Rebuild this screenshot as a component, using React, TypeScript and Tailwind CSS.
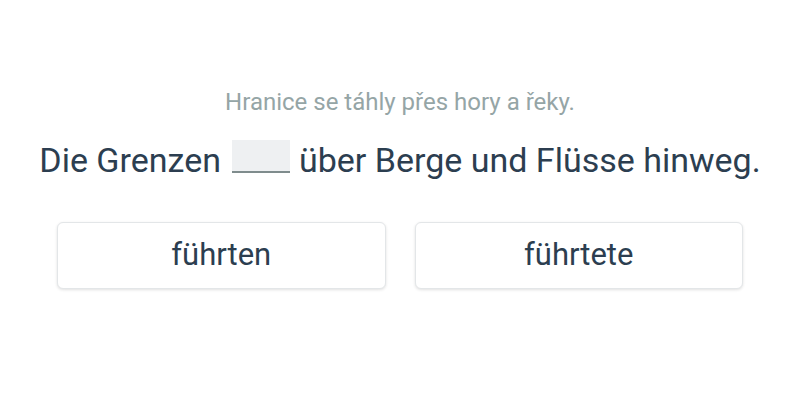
import React from "react";

export default function App() {
    const options = ["führten", "führtete"];

    return (
        <div className="w-[800px] h-[400px] bg-white flex flex-col items-center font-['Roboto',sans-serif]">
            <p className="mt-[86px] text-[24px] leading-[32px] text-[#95a5a6]">
                Hranice se táhly přes hory a řeky.
            </p>
            <h1 className="mt-[22px] h-[40px] text-[34px] leading-[40px] text-[#2c3e50] flex items-start">
                Die Grenzen
                <span className="inline-block w-[58px] h-[33px] ml-[11px] mr-[9px] bg-[#eef0f2] border-b-2 border-[#7f8c8d]"></span>
                über Berge und Flüsse hinweg.
            </h1>
            <div className="mt-[42px] grid grid-cols-2 gap-[29px] w-[686px]">
                {options.map((o) => (
                    <button
                        key={o}
                        className="h-[67px] bg-white rounded-[6px] border border-[#e3e6e8] shadow-[0_1px_3px_rgba(0,0,0,0.12)] text-[31px] text-[#2c3e50]"
                    >
                        {o}
                    </button>
                ))}
            </div>
        </div>
    );
}
